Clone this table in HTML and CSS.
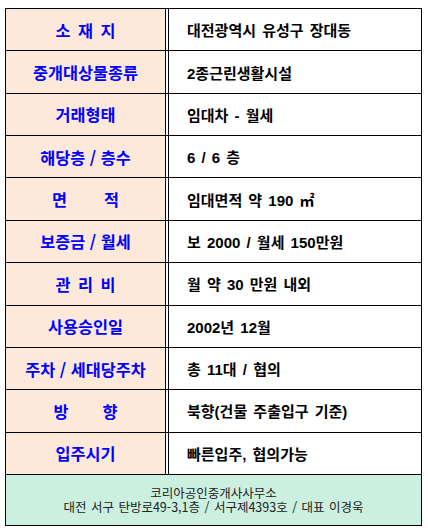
FILE: index.html
```html
<!DOCTYPE html>
<html lang="ko">
<head>
<meta charset="utf-8">
<title>매물 정보</title>
<link rel="stylesheet" href="styles.css">
</head>
<body>
<div class="sheet">
  <div class="row"><div class="label wide">소 재 지</div><div class="value">대전광역시 유성구 장대동</div></div>
  <div class="row"><div class="label">중개대상물종류</div><div class="value">2종근린생활시설</div></div>
  <div class="row"><div class="label">거래형태</div><div class="value">임대차 - 월세</div></div>
  <div class="row"><div class="label">해당층 / 층수</div><div class="value">6 / 6 층</div></div>
  <div class="row"><div class="label split"><span>면</span><span>적</span></div><div class="value">임대면적 약 190 ㎡</div></div>
  <div class="row"><div class="label">보증금 / 월세</div><div class="value">보 2000 / 월세 150만원</div></div>
  <div class="row"><div class="label wide">관 리 비</div><div class="value">월 약 30 만원 내외</div></div>
  <div class="row"><div class="label">사용승인일</div><div class="value">2002년 12월</div></div>
  <div class="row"><div class="label">주차 / 세대당주차</div><div class="value">총 11대 / 협의</div></div>
  <div class="row"><div class="label split mid"><span>방</span><span>향</span></div><div class="value">북향(건물 주출입구 기준)</div></div>
  <div class="row"><div class="label">입주시기</div><div class="value">빠른입주, 협의가능</div></div>
  <div class="footer">
    <div class="fline">코리아공인중개사사무소</div>
    <div class="fline">대전 서구 탄방로49-3,1층 / 서구제4393호 / 대표 이경욱</div>
  </div>
</div>
</body>
</html>
```
FILE: styles.css
```css
html, body {
  margin: 0;
  padding: 0;
  background: #ffffff;
}
body {
  padding: 8px 0 0 5px;
  font-family: "Noto Sans CJK KR", "Noto Sans", sans-serif;
}
.sheet {
  width: 415px;
  border: 1px solid #000;
}
.row {
  box-sizing: border-box;
  height: 42.36px;
  border-bottom: 1px solid #000;
  display: flex;
}
.label {
  width: 159px;
  background: #fde9d9;
  border-right: 1px solid #000;
  color: #0000ff;
  font-weight: 700;
  font-size: 16.3px;
  display: flex;
  align-items: center;
  justify-content: center;
  white-space: pre;
}
.label.wide {
  word-spacing: 3px;
}
.label.split {
  gap: 37px;
}
.label.split.mid {
  gap: 34px;
}
.value {
  flex: 1;
  margin-left: 2px;
  border-left: 1px solid #000;
  padding-left: 18px;
  font-family: "Liberation Sans", "Noto Sans CJK KR", sans-serif;
  font-size: 15px;
  font-weight: 700;
  word-spacing: 2px;
  color: #000;
  display: flex;
  align-items: center;
  white-space: pre;
}
.footer {
  height: 50px;
  background: #ccf0e0;
  color: #222;
  font-size: 12.5px;
  display: flex;
  flex-direction: column;
  align-items: center;
  justify-content: center;
}
.fline {
  height: 14px;
  line-height: 14px;
  word-spacing: 1px;
}
```
